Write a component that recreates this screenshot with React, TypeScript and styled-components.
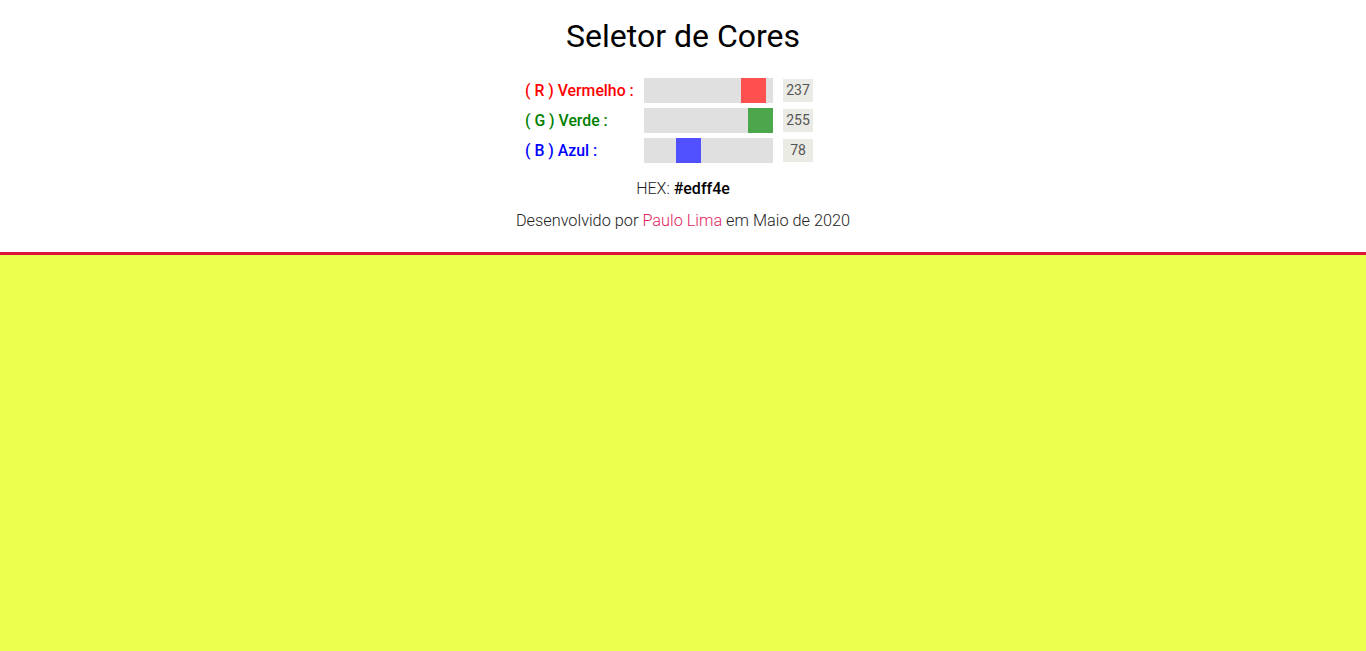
import React, { useState } from "react";
import styled, { createGlobalStyle } from "styled-components";

const Global = createGlobalStyle`
  html, body { margin: 0; padding: 0; }
  body { font-family: Roboto, "Noto Sans", sans-serif; background: #fff; }
`;

const Page = styled.div`
  min-height: 100vh;
  display: flex;
  flex-direction: column;
`;

const Header = styled.header`
  display: flex;
  flex-direction: column;
  align-items: center;
  padding: 17px 0 22px;
  border-bottom: 3px solid #dc143c;
`;

const Title = styled.h1`
  margin: 0;
  font-size: 32px;
  line-height: 38px;
  font-weight: 400;
  color: #000;
`;

const Controls = styled.div`
  margin-top: 23px;
  display: flex;
  flex-direction: column;
  gap: 5px;
  padding-right: 28px;
`;

const Row = styled.div`
  display: grid;
  grid-template-columns: 119px 129px 40px;
  align-items: center;
  height: 25px;
`;

const Label = styled.label<{ $color: string }>`
  color: ${(p) => p.$color};
  font-size: 15.8px;
  font-weight: 500;
  white-space: nowrap;
`;

const Range = styled.input<{ $thumb: string }>`
  -webkit-appearance: none;
  appearance: none;
  margin: 0;
  width: 129px;
  height: 25px;
  background: #e0e0e0;
  outline: none;
  &::-webkit-slider-thumb {
    -webkit-appearance: none;
    appearance: none;
    width: 25px;
    height: 25px;
    background: ${(p) => p.$thumb};
    border: none;
    border-radius: 0;
    cursor: pointer;
  }
  &::-moz-range-thumb {
    width: 25px;
    height: 25px;
    background: ${(p) => p.$thumb};
    border: none;
    border-radius: 0;
  }
`;

const Value = styled.span`
  margin-left: 10px;
  width: 30px;
  height: 23px;
  display: flex;
  align-items: center;
  justify-content: center;
  background: #ebebe5;
  color: #555;
  font-size: 14px;
  margin-top: -1px;
`;

const Hex = styled.p`
  margin: 16px 0 0;
  font-size: 16px;
  line-height: 19px;
  font-weight: 300;
  color: #222;
  strong { font-weight: 500; color: #000; }
`;

const Footer = styled.p`
  margin: 13px 0 0;
  font-size: 16.3px;
  line-height: 19px;
  font-weight: 300;
  color: #222;
  a { color: #e0245e; text-decoration: none; font-weight: 300; }
`;

const Preview = styled.div<{ $bg: string }>`
  flex: 1;
  background: ${(p) => p.$bg};
`;

const toHex = (n: number) => n.toString(16).padStart(2, "0");

export default function App() {
  const [r, setR] = useState(237);
  const [g, setG] = useState(255);
  const [b, setB] = useState(78);
  const hex = `#${toHex(r)}${toHex(g)}${toHex(b)}`;

  const channels = [
    { key: "r", label: "( R ) Vermelho :", color: "#ff0000", thumb: "#ff5050", value: r, set: setR },
    { key: "g", label: "( G ) Verde :", color: "#008000", thumb: "#4ca64c", value: g, set: setG },
    { key: "b", label: "( B ) Azul :", color: "#0000ff", thumb: "#5050ff", value: b, set: setB },
  ];

  return (
    <Page>
      <Global />
      <Header>
        <Title>Seletor de Cores</Title>
        <Controls>
          {channels.map((c) => (
            <Row key={c.key}>
              <Label $color={c.color}>{c.label}</Label>
              <Range
                type="range"
                min={0}
                max={255}
                value={c.value}
                $thumb={c.thumb}
                onChange={(e) => c.set(Number(e.target.value))}
              />
              <Value>{c.value}</Value>
            </Row>
          ))}
        </Controls>
        <Hex>
          HEX: <strong>{hex}</strong>
        </Hex>
        <Footer>
          Desenvolvido por <a href="#">Paulo Lima</a> em Maio de 2020
        </Footer>
      </Header>
      <Preview $bg={hex} />
    </Page>
  );
}
